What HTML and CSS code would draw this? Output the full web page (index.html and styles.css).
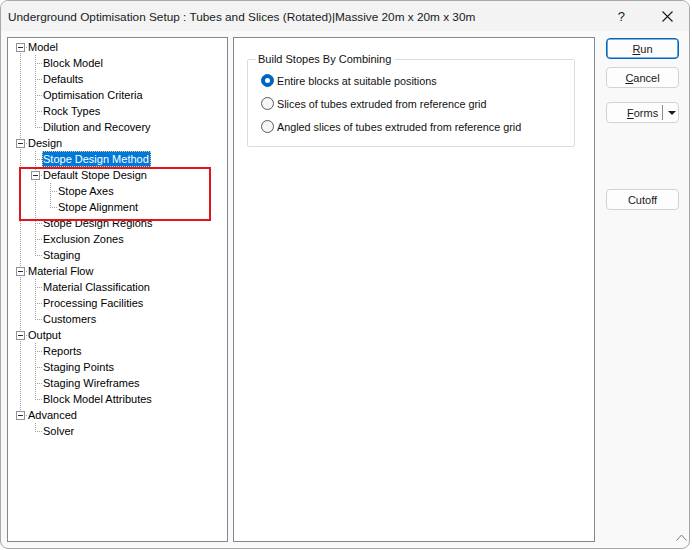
FILE: index.html
```html
<!DOCTYPE html>
<html>
<head>
<meta charset="utf-8">
<link rel="stylesheet" href="styles.css">
</head>
<body>
<div class="window">
  <div class="titlebar">
    <span class="title">Underground Optimisation Setup : Tubes and Slices (Rotated)|Massive 20m x 20m x 30m</span>
    <span class="help">?</span>
    <svg class="close" width="11" height="11" viewBox="0 0 11 11"><path d="M0.5 0.5 L10.5 10.5 M10.5 0.5 L0.5 10.5" stroke="#1a1a1a" stroke-width="1.1" fill="none"/></svg>
  </div>
  <div class="content">
    <div class="tree">
      <div class="row"><i class="g d h"><b class="box"><b></b></b></i><span class="lbl">Model</span></div>
      <div class="row"><i class="g v"></i><i class="g t h"></i><span class="lbl">Block Model</span></div>
      <div class="row"><i class="g v"></i><i class="g t h"></i><span class="lbl">Defaults</span></div>
      <div class="row"><i class="g v"></i><i class="g t h"></i><span class="lbl">Optimisation Criteria</span></div>
      <div class="row"><i class="g v"></i><i class="g t h"></i><span class="lbl">Rock Types</span></div>
      <div class="row"><i class="g v"></i><i class="g u h"></i><span class="lbl">Dilution and Recovery</span></div>
      <div class="row"><i class="g t h"><b class="box"><b></b></b></i><span class="lbl">Design</span></div>
      <div class="row"><i class="g v"></i><i class="g t h"></i><span class="lbl sel">Stope Design Method</span></div>
      <div class="row"><i class="g v"></i><i class="g t h"><b class="box"><b></b></b></i><span class="lbl">Default Stope Design</span></div>
      <div class="row"><i class="g v"></i><i class="g v"></i><i class="g t h"></i><span class="lbl">Stope Axes</span></div>
      <div class="row"><i class="g v"></i><i class="g v"></i><i class="g u h"></i><span class="lbl">Stope Alignment</span></div>
      <div class="row"><i class="g v"></i><i class="g t h"></i><span class="lbl">Stope Design Regions</span></div>
      <div class="row"><i class="g v"></i><i class="g t h"></i><span class="lbl">Exclusion Zones</span></div>
      <div class="row"><i class="g v"></i><i class="g u h"></i><span class="lbl">Staging</span></div>
      <div class="row"><i class="g t h"><b class="box"><b></b></b></i><span class="lbl">Material Flow</span></div>
      <div class="row"><i class="g v"></i><i class="g t h"></i><span class="lbl">Material Classification</span></div>
      <div class="row"><i class="g v"></i><i class="g t h"></i><span class="lbl">Processing Facilities</span></div>
      <div class="row"><i class="g v"></i><i class="g u h"></i><span class="lbl">Customers</span></div>
      <div class="row"><i class="g t h"><b class="box"><b></b></b></i><span class="lbl">Output</span></div>
      <div class="row"><i class="g v"></i><i class="g t h"></i><span class="lbl">Reports</span></div>
      <div class="row"><i class="g v"></i><i class="g t h"></i><span class="lbl">Staging Points</span></div>
      <div class="row"><i class="g v"></i><i class="g t h"></i><span class="lbl">Staging Wireframes</span></div>
      <div class="row"><i class="g v"></i><i class="g u h"></i><span class="lbl">Block Model Attributes</span></div>
      <div class="row"><i class="g u h"><b class="box"><b></b></b></i><span class="lbl">Advanced</span></div>
      <div class="row"><i class="g"></i><i class="g u h"></i><span class="lbl">Solver</span></div>
      <div class="highlight"></div>
    </div>
    <div class="panel">
      <div class="group">
        <div class="legend">Build Stopes By Combining</div>
        <div class="radios">
          <div class="radio"><span class="dot on"><span></span></span><span>Entire blocks at suitable positions</span></div>
          <div class="radio"><span class="dot"></span><span>Slices of tubes extruded from reference grid</span></div>
          <div class="radio"><span class="dot"></span><span>Angled slices of tubes extruded from reference grid</span></div>
        </div>
      </div>
    </div>
    <div class="buttons">
      <div class="btn default"><span><u>R</u>un</span></div>
      <div class="btn cancel"><span><u>C</u>ancel</span></div>
      <div class="btn forms"><span class="ftext"><u>F</u>orms</span><span class="sep"></span><span class="arrow"></span></div>
      <div class="btn cutoff"><span>Cutoff</span></div>
    </div>
  </div>
  <svg class="grip" width="11" height="7" viewBox="0 0 11 7"><path d="M0.5 6.5 L5.5 1 L10.5 6.5" stroke="#7a7a7a" stroke-width="1" fill="none"/></svg>
</div>
</body>
</html>
```

FILE: styles.css
```css
html, body {
  margin: 0;
  padding: 0;
  background: #ffffff;
}
body {
  font-family: "Liberation Sans", Arial, sans-serif;
  font-size: 11px;
  color: #000;
}
.window {
  position: relative;
  box-sizing: border-box;
  width: 690px;
  height: 549px;
  border: 1px solid #a8a8a8;
  border-radius: 8px;
  background: #f9f9f9;
  overflow: hidden;
}
.titlebar {
  height: 30px;
  background: #f3f3f3;
  display: flex;
  align-items: center;
  padding-left: 7px;
}
.title {
  font-size: 11.8px;
  color: #1a1a1a;
  flex: 1;
  padding-top: 1px;
}
.help {
  font-size: 13px;
  color: #1a1a1a;
  margin-right: 37px;
}
.close {
  margin-right: 16px;
}
.content {
  display: flex;
  padding: 6px 0 0 6px;
}
.tree {
  position: relative;
  box-sizing: border-box;
  width: 221px;
  height: 505px;
  border: 1px solid #828790;
  background: #fff;
  padding: 1px 0 0 4px;
}
.row {
  display: flex;
  height: 16px;
  line-height: 16px;
}
.g {
  display: flex;
  width: 15px;
  height: 16px;
  flex: none;
  background-repeat: no-repeat;
}
.g.v {
  background-image: repeating-linear-gradient(to bottom, #a0a0a0 0 1px, transparent 1px 2px);
  background-size: 1px 16px;
  background-position: 8px 0;
}
.g.t.h {
  background-image:
    repeating-linear-gradient(to bottom, #a0a0a0 0 1px, transparent 1px 2px),
    repeating-linear-gradient(to right, #a0a0a0 0 1px, transparent 1px 2px);
  background-size: 1px 16px, 7px 1px;
  background-position: 8px 0, 8px 8px;
}
.g.u.h {
  background-image:
    repeating-linear-gradient(to bottom, #a0a0a0 0 1px, transparent 1px 2px),
    repeating-linear-gradient(to right, #a0a0a0 0 1px, transparent 1px 2px);
  background-size: 1px 9px, 7px 1px;
  background-position: 8px 0, 8px 8px;
}
.g.d.h {
  background-image:
    repeating-linear-gradient(to bottom, #a0a0a0 0 1px, transparent 1px 2px),
    repeating-linear-gradient(to right, #a0a0a0 0 1px, transparent 1px 2px);
  background-size: 1px 8px, 7px 1px;
  background-position: 8px 8px, 8px 8px;
}
.box {
  box-sizing: border-box;
  width: 9px;
  height: 9px;
  margin: 4px 0 0 4px;
  border: 1px solid #919191;
  background: #fff;
  display: flex;
  align-items: center;
  justify-content: center;
}
.box b {
  display: block;
  width: 5px;
  height: 1px;
  background: #2b2b2b;
}
.lbl {
  padding: 0 2px 0 1px;
  white-space: nowrap;
}
.lbl.sel {
  background: #0078d7;
  color: #fff;
  box-sizing: border-box;
  height: 16px;
  line-height: 14px;
  border: 1px dotted #f2c97a;
  padding: 0 1px 0 0;
}
.highlight {
  position: absolute;
  left: 11px;
  top: 129px;
  width: 192px;
  height: 54px;
  box-sizing: border-box;
  border: 2px solid #e3151b;
}
.panel {
  box-sizing: border-box;
  width: 362px;
  height: 505px;
  margin-left: 5px;
  border: 1px solid #828790;
  background: #fff;
  padding: 21px 0 0 13px;
}
.group {
  box-sizing: border-box;
  width: 328px;
  height: 88px;
  border: 1px solid #dcdcdc;
  border-radius: 2px;
}
.legend {
  width: max-content;
  height: 14px;
  background: #fff;
  margin: -8px 0 0 8px;
  padding: 0 3px 0 2px;
  line-height: 14px;
  color: #111;
}
.radios {
  margin-top: 3px;
  padding-left: 13px;
  font-size: 10.8px;
}
.radio {
  display: flex;
  align-items: center;
  height: 23px;
  color: #111;
}
.dot {
  box-sizing: border-box;
  width: 13px;
  height: 13px;
  border-radius: 50%;
  border: 1px solid #5a5a5a;
  background: #f6f6f6;
  margin-right: 3px;
  display: flex;
  align-items: center;
  justify-content: center;
}
.dot.on {
  background: #0067c0;
  border-color: #0067c0;
}
.dot.on span {
  width: 5px;
  height: 5px;
  border-radius: 50%;
  background: #fff;
}
.buttons {
  margin-left: 11px;
  width: 73px;
  display: flex;
  flex-direction: column;
  padding-top: 1px;
}
.btn {
  box-sizing: border-box;
  height: 21px;
  border: 1px solid #d3d3d3;
  border-radius: 4px;
  background: #fdfdfd;
  display: flex;
  align-items: center;
  justify-content: center;
  color: #1a1a1a;
}
.btn.default {
  border-color: #0067c0;
  box-shadow: inset 0 0 0 0.6px #0067c0;
}
.btn.cancel {
  margin-top: 8px;
}
.btn.forms {
  margin-top: 14px;
  justify-content: flex-start;
  padding-left: 20px;
}
.btn.cutoff {
  margin-top: 66px;
}
.ftext {
  width: 35px;
}
.sep {
  width: 1px;
  height: 15px;
  background: #8a8a8a;
}
.arrow {
  margin-left: 5px;
  width: 0;
  height: 0;
  border-left: 4px solid transparent;
  border-right: 4px solid transparent;
  border-top: 4px solid #1a1a1a;
}
.grip {
  position: absolute;
  right: 2px;
  bottom: 7px;
}
```
